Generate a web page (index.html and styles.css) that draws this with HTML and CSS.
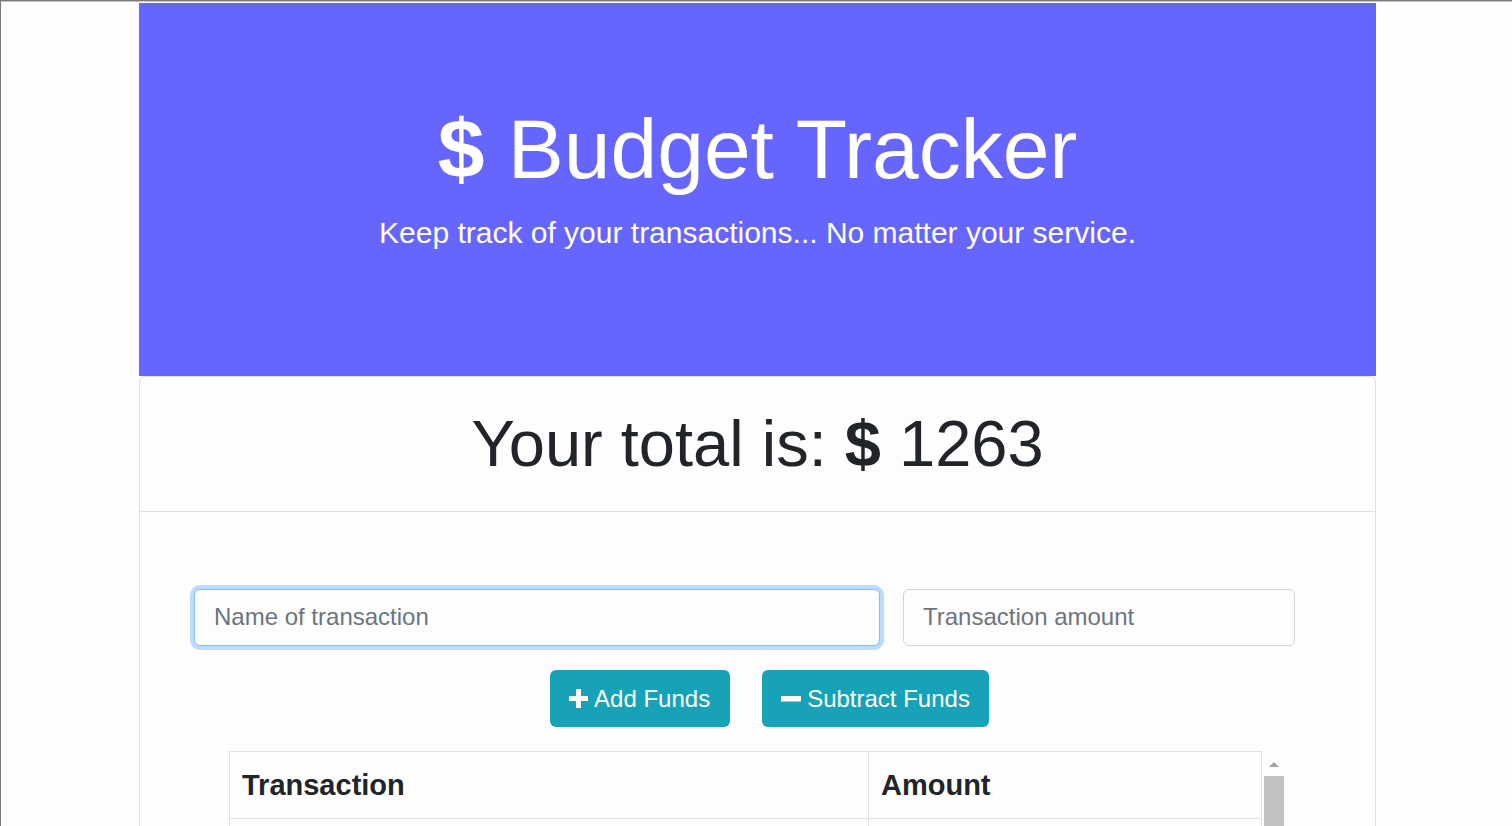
FILE: index.html
```html
<!DOCTYPE html>
<html lang="en">
<head>
<meta charset="utf-8">
<title>Budget Tracker</title>
<link rel="stylesheet" href="styles.css">
</head>
<body>
<div class="frame-top"></div>
<div class="page">
  <header class="hero">
    <h1 class="hero-title"><span class="dollar">$</span> Budget Tracker</h1>
    <p class="hero-lead">Keep track of your transactions... No matter your service.</p>
  </header>
  <section class="card">
    <div class="card-header">
      <h2 class="total">Your total is: <span class="total-dollar">$</span> <span class="total-amount">1263</span></h2>
    </div>
    <div class="card-body">
      <div class="form-row">
        <input class="field field-name is-focused" type="text" placeholder="Name of transaction">
        <input class="field field-amount" type="number" placeholder="Transaction amount">
      </div>
      <div class="actions">
        <button class="btn" type="button">
          <svg class="icon" width="19" height="19" viewBox="0 0 19 19" aria-hidden="true"><path d="M7 0h5v7h7v5h-7v7H7v-7H0V7h7z" fill="#fff"/></svg>
          <span>Add Funds</span>
        </button>
        <button class="btn" type="button">
          <svg class="icon" width="20" height="19" viewBox="0 0 20 19" aria-hidden="true"><rect x="0" y="7" width="20" height="5.5" fill="#fff"/></svg>
          <span>Subtract Funds</span>
        </button>
      </div>
      <div class="table-wrap">
        <table class="tx-table">
          <colgroup><col class="col-name"><col class="col-amount"></colgroup>
          <thead>
            <tr><th>Transaction</th><th>Amount</th></tr>
          </thead>
          <tbody>
            <tr><td></td><td></td></tr>
            <tr><td></td><td></td></tr>
          </tbody>
        </table>
        <div class="scrollbar">
          <div class="scroll-arrow"></div>
          <div class="scroll-thumb"></div>
        </div>
      </div>
    </div>
  </section>
</div>
</body>
</html>
```

FILE: styles.css
```css
html {
  background: #fdfdfd;
}
body {
  margin: 0;
  height: 826px;
  overflow: hidden;
  box-sizing: border-box;
  border-left: 1px solid #7a7a7a;
  background: #fdfdfd;
  font-family: "Liberation Sans", Arial, sans-serif;
  color: #212529;
}
.frame-top {
  height: 1px;
  background: #7a7a7a;
  border-bottom: 1px solid #c6c6c6;
  margin-bottom: 1px;
}
.page {
  width: 1237px;
  margin-left: 138px;
}
.hero {
  height: 373px;
  box-sizing: border-box;
  background: #6666ff;
  color: #fff;
  padding-top: 96px;
  display: flex;
  flex-direction: column;
  align-items: center;
}
.hero-title {
  margin: 0 0 10px;
  font-size: 84px;
  font-weight: 400;
  line-height: 1.2;
}
.dollar {
  font-weight: 700;
}
.hero-lead {
  margin: 0;
  font-size: 30px;
  line-height: 1.5;
}
.card {
  border: 1px solid #dfdfdf;
  border-radius: 6px 6px 0 0;
  border-bottom: none;
}
.card-header {
  height: 134px;
  border-bottom: 1px solid #dfdfdf;
  display: flex;
  align-items: center;
  justify-content: center;
}
.total {
  margin: 0;
  font-size: 65px;
  font-weight: 400;
  line-height: 1.2;
}
.total-dollar {
  font-weight: 700;
}
.card-body {
  padding-top: 77px;
}
.form-row {
  display: flex;
  gap: 23px;
  padding-left: 54px;
}
.field {
  box-sizing: border-box;
  height: 57px;
  margin: 0;
  padding: 0 19px 2px;
  border: 1px solid #ced4da;
  border-radius: 6px;
  background: #fdfdfd;
  font-family: inherit;
  font-size: 24px;
  color: #495057;
  outline: none;
}
.field::placeholder {
  color: #6c757d;
}
.field-name {
  width: 686px;
}
.field-amount {
  width: 392px;
}
.is-focused {
  border-color: #80bdff;
  box-shadow: 0 0 0 4px rgba(0, 123, 255, 0.25);
}
.actions {
  display: flex;
  justify-content: center;
  gap: 32px;
  margin-top: 24px;
  padding-left: 24px;
}
.btn {
  display: flex;
  align-items: center;
  gap: 6px;
  height: 57px;
  padding: 0 19.5px;
  border: none;
  border-radius: 6px;
  background: #17a2b8;
  color: #fff;
  font-family: inherit;
  font-size: 24px;
}
.icon {
  flex: none;
}
.table-wrap {
  display: flex;
  width: 1056px;
  margin: 24px 0 0 89px;
  height: 300px;
  overflow: hidden;
}
.tx-table {
  width: 1033px;
  flex: none;
  table-layout: fixed;
  border-collapse: collapse;
  align-self: flex-start;
}
.col-name {
  width: 639px;
}
.tx-table th,
.tx-table td {
  border: 1px solid #dee2e6;
  text-align: left;
  padding: 11px 12px;
  font-size: 29px;
  line-height: 44px;
  height: 44px;
}
.tx-table th {
  font-weight: 700;
}
.scrollbar {
  flex: none;
  width: 23px;
  display: flex;
  flex-direction: column;
  align-items: center;
}
.scroll-arrow {
  margin-top: 11px;
  width: 0;
  height: 0;
  border-left: 5px solid transparent;
  border-right: 5px solid transparent;
  border-bottom: 5px solid #a3a3a3;
}
.scroll-thumb {
  margin-top: 9px;
  width: 20px;
  height: 200px;
  background: #c1c1c1;
}
```
